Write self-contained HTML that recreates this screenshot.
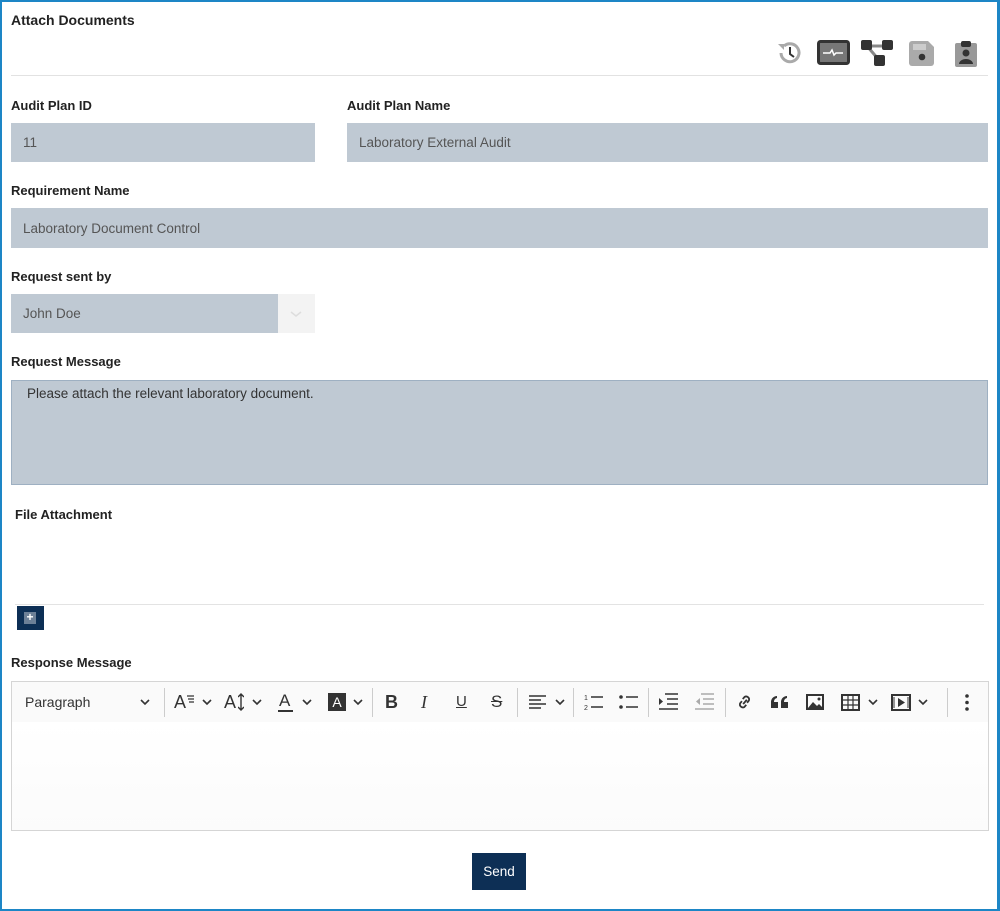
<!DOCTYPE html>
<html><head><meta charset="utf-8"><style>
*{box-sizing:border-box;margin:0;padding:0}
body{width:1000px;height:911px;background:#fff;font-family:"Liberation Sans",Arial,sans-serif;color:#222;position:relative;overflow:hidden}
.frame{position:absolute;inset:0;border:2px solid #1d86c6;border-right-width:3px}
.a{position:absolute}
.lbl{font-size:13px;font-weight:bold;color:#222}
.inp{background:#bfc9d3;font-size:13.5px;color:#555;padding-left:12px;display:flex;align-items:center}
.tb{position:absolute;top:681px;left:11px;width:978px;height:42px;border:1px solid #d5d5d5;background:#fafafa}
.tb span{position:absolute;top:0;line-height:40px;font-size:15px;color:#333}
.tb svg{position:absolute}
.sep{position:absolute;top:6px;width:1px;height:29px;background:#ccc}
</style></head><body>
<div class="frame"></div>
<div class="a lbl" style="left:11px;top:12px;font-size:14px">Attach Documents</div>
<svg class="a" style="left:775px;top:38px" width="30" height="30" viewBox="0 0 30 30"><path d="M6 15a9 9 0 1 0 3-7" fill="none" stroke="#aaa" stroke-width="3"/><path d="M3 6l6 0 0 6z" fill="#aaa"/><path d="M15 9v7l4 3" fill="none" stroke="#333" stroke-width="2"/></svg>
<svg class="a" style="left:817px;top:40px" width="33" height="25"><rect x="1.5" y="1.5" width="30" height="22" rx="2" fill="#777" stroke="#333" stroke-width="3"/><path d="M6 13h7l2-3 2 5 2-2h7" fill="none" stroke="#fff" stroke-width="1.5"/></svg>
<svg class="a" style="left:861px;top:40px" width="33" height="27"><path d="M6 6h22M6 6l12 14" stroke="#888" stroke-width="3"/><rect x="0" y="0" width="11" height="10" rx="2" fill="#333"/><rect x="21" y="0" width="11" height="10" rx="2" fill="#333"/><rect x="13" y="15" width="11" height="11" rx="2" fill="#333"/></svg>
<svg class="a" style="left:909px;top:41px" width="26" height="25"><path d="M3 0h16l6 6v16a3 3 0 0 1-3 3H3a3 3 0 0 1-3-3V3a3 3 0 0 1 3-3z" fill="#aaa"/><rect x="4" y="3" width="13" height="6" fill="#ccc"/><circle cx="13" cy="16" r="3.3" fill="#333"/></svg>
<svg class="a" style="left:955px;top:39px" width="22" height="28"><rect x="0" y="4" width="22" height="24" rx="2" fill="#999"/><rect x="6" y="2" width="10" height="6" rx="2" fill="#333"/><circle cx="11" cy="14" r="3.5" fill="#333"/><path d="M4 25a7 5 0 0 1 14 0z" fill="#333"/></svg>
<div class="a" style="left:11px;top:75px;width:977px;height:1px;background:#e2e2e2"></div>

<div class="a lbl" style="left:11px;top:98px">Audit Plan ID</div>
<div class="a lbl" style="left:347px;top:98px">Audit Plan Name</div>
<div class="a inp" style="left:11px;top:123px;width:304px;height:39px">11</div>
<div class="a inp" style="left:347px;top:123px;width:641px;height:39px">Laboratory External Audit</div>
<div class="a lbl" style="left:11px;top:183px">Requirement Name</div>
<div class="a inp" style="left:11px;top:208px;width:977px;height:40px">Laboratory Document Control</div>
<div class="a lbl" style="left:11px;top:269px">Request sent by</div>
<div class="a inp" style="left:11px;top:294px;width:267px;height:39px">John Doe</div>
<div class="a" style="left:278px;top:294px;width:37px;height:39px;background:#f3f3f3"><svg width="37" height="39"><path d="M13 18l5 4 5-4" fill="none" stroke="#ddd" stroke-width="1.5"/></svg></div>
<div class="a lbl" style="left:11px;top:354px">Request Message</div>
<div class="a" style="left:11px;top:380px;width:977px;height:105px;background:#bfc9d3;border:1px solid #9eb0c2;font-size:13.5px;color:#333;padding:5px 15px">Please attach the relevant laboratory document.</div>
<div class="a lbl" style="left:15px;top:507px">File Attachment</div>
<div class="a" style="left:15px;top:604px;width:969px;height:1px;background:#e3e3e3"></div>
<div class="a" style="left:17px;top:606px;width:27px;height:24px;background:#0d2f55"><div style="position:absolute;left:7px;top:6px;width:12px;height:12px;background:#6d8097;color:#fff;font-size:12px;line-height:11px;text-align:center;font-weight:bold">+</div></div>
<div class="a lbl" style="left:11px;top:655px">Response Message</div>
<div class="tb">
<span style="left:13px;font-size:14px">Paragraph</span>
<svg style="left:128px;top:17px" width="10" height="7"><path d="M1 1l4 4 4-4" fill="none" stroke="#333" stroke-width="1.6"/></svg>
<div class="sep" style="left:152px"></div>
<span style="left:162px;font-size:18px">A</span><svg style="left:175px;top:13px" width="7" height="8"><path d="M0 1h7M1 4h6M2 7h5" stroke="#333" stroke-width="1.2"/></svg>
<svg style="left:190px;top:17px" width="10" height="7"><path d="M1 1l4 4 4-4" fill="none" stroke="#333" stroke-width="1.6"/></svg>
<span style="left:212px;font-size:18px">A</span><svg style="left:226px;top:11px" width="6" height="18"><path d="M3 1v16M0 4l3-3 3 3M0 14l3 3 3-3" fill="none" stroke="#333" stroke-width="1.4"/></svg>
<svg style="left:240px;top:17px" width="10" height="7"><path d="M1 1l4 4 4-4" fill="none" stroke="#333" stroke-width="1.6"/></svg>
<span style="left:267px;font-size:17px;line-height:38px">A</span><div class="a" style="left:266px;top:28px;width:15px;height:1.5px;background:#333"></div>
<svg style="left:290px;top:17px" width="10" height="7"><path d="M1 1l4 4 4-4" fill="none" stroke="#333" stroke-width="1.6"/></svg>
<span style="left:316px;top:11px;width:18px;height:18px;background:#333;color:#fff;font-size:14px;line-height:18px;text-align:center">A</span>
<svg style="left:341px;top:17px" width="10" height="7"><path d="M1 1l4 4 4-4" fill="none" stroke="#333" stroke-width="1.6"/></svg>
<div class="sep" style="left:360px"></div>
<span style="left:373px;font-weight:bold;font-size:18px">B</span>
<span style="left:409px;font-style:italic;font-size:18px;font-family:'Liberation Serif'">I</span>
<span style="left:444px;text-decoration:underline">U</span>
<span style="left:479px;text-decoration:line-through;font-size:17px">S</span>
<div class="sep" style="left:505px"></div>
<svg style="left:517px;top:13px" width="18" height="14"><path d="M0 1h17M0 5h12M0 9h17M0 13h12" stroke="#333" stroke-width="1.5"/></svg>
<svg style="left:543px;top:17px" width="10" height="7"><path d="M1 1l4 4 4-4" fill="none" stroke="#333" stroke-width="1.6"/></svg>
<div class="sep" style="left:561px"></div>
<svg style="left:572px;top:11px" width="20" height="18"><text x="0" y="7" font-size="7" font-family="Liberation Sans" fill="#333">1</text><text x="0" y="17" font-size="7" font-family="Liberation Sans" fill="#333">2</text><path d="M7 4h12M7 14h12" stroke="#333" stroke-width="1.6"/></svg>
<svg style="left:607px;top:11px" width="20" height="18"><circle cx="2" cy="4" r="1.8" fill="#333"/><circle cx="2" cy="14" r="1.8" fill="#333"/><path d="M7 4h12M7 14h12" stroke="#333" stroke-width="1.6"/></svg>
<div class="sep" style="left:636px"></div>
<svg style="left:647px;top:11px" width="19" height="17"><path d="M6 1h13M8 6h11M8 11h11M0 16h19" stroke="#333" stroke-width="1.5"/><path d="M0 5l4 3.5-4 3.5z" fill="#333"/></svg>
<svg style="left:683px;top:11px" width="19" height="17"><path d="M6 1h13M8 6h11M8 11h11M0 16h19" stroke="#aaa" stroke-width="1.5"/><path d="M5 5l-4 3.5 4 3.5z" fill="#aaa"/></svg>
<div class="sep" style="left:713px"></div>
<svg style="left:724px;top:11px" width="17" height="18"><path d="M7 11l4-4M6 8l-2 2a3 3 0 0 0 4 4l2-2M11 10l2-2a3 3 0 0 0-4-4l-2 2" fill="none" stroke="#333" stroke-width="1.8" transform="rotate(-5 8 9)"/></svg>
<svg style="left:759px;top:14px" width="17" height="12"><path d="M0 12V6a6 6 0 0 1 6-6v2a4 4 0 0 0-3 4h4v6zM10 12V6a6 6 0 0 1 6-6v2a4 4 0 0 0-3 4h4v6z" fill="#333"/></svg>
<svg style="left:794px;top:12px" width="18" height="16"><rect x="1" y="1" width="16" height="14" fill="none" stroke="#333" stroke-width="2"/><path d="M2 14l5-6 4 4 2-2 4 4z" fill="#333"/><circle cx="13" cy="5" r="1.5" fill="#333"/></svg>
<svg style="left:829px;top:12px" width="19" height="17"><rect x="1" y="1" width="17" height="15" fill="none" stroke="#333" stroke-width="2"/><path d="M1 6h17M1 11h17M7 1v15M12 1v15" stroke="#333" stroke-width="1.2"/></svg>
<svg style="left:856px;top:17px" width="10" height="7"><path d="M1 1l4 4 4-4" fill="none" stroke="#333" stroke-width="1.6"/></svg>
<svg style="left:879px;top:12px" width="20" height="17"><rect x="1" y="1" width="18" height="15" fill="none" stroke="#333" stroke-width="2"/><path d="M3 3v11M17 3v11" stroke="#333" stroke-width="1"/><path d="M7 4v9l7-4.5z" fill="#333"/></svg>
<svg style="left:906px;top:17px" width="10" height="7"><path d="M1 1l4 4 4-4" fill="none" stroke="#333" stroke-width="1.6"/></svg>
<div class="sep" style="left:935px"></div>
<svg style="left:953px;top:12px" width="4" height="17"><circle cx="2" cy="2" r="1.8" fill="#333"/><circle cx="2" cy="8.5" r="1.8" fill="#333"/><circle cx="2" cy="15" r="1.8" fill="#333"/></svg>
</div>
<div class="a" style="left:11px;top:722px;width:978px;height:109px;border:1px solid #d5d5d5;border-top:none;background:linear-gradient(#fff,#fbfbfb)"></div>
<div class="a" style="left:472px;top:853px;width:54px;height:37px;background:#0d2f55;color:#fff;font-size:13.5px;line-height:37px;text-align:center">Send</div>
</body></html>
